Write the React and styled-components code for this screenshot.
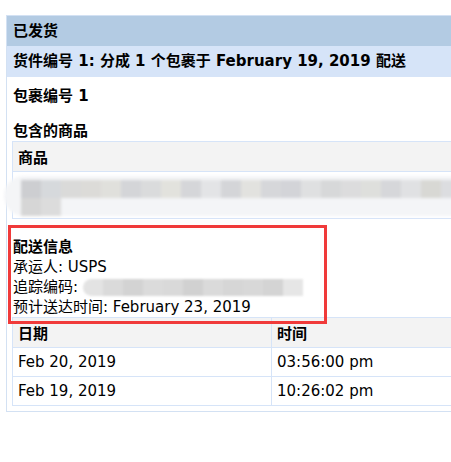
import React from 'react'
import styled, {createGlobalStyle} from 'styled-components'

const GlobalStyle = createGlobalStyle`
    html, body {
        margin: 0;
        padding: 0;
        background: #fff;
        overflow: hidden;
    }
    body {
        font-family: "DejaVu Sans", "Noto Sans CJK SC", sans-serif;
        font-size: 15px;
        color: #000;
    }
`

const itemMosaic = ['#cdced1', '#d6d9dc', '#dadad9', '#dcdbd8', '#e0e0dc', '#d4d5d8', '#dadbdc', '#e2e2dd', '#d5d6d9', '#e3e4e6', '#d4d5d8', '#e2e2df', '#d6d7da', '#d3d4d8', '#dfe0e1', '#d7d8d9', '#dcdcdd', '#dedfdc', '#d6d7da', '#e0e1e3', '#d8d8d4', '#dcdde0']
const trackMosaic = ['#e3e3e3', '#dadada', '#d3d3d3', '#dbdbdb', '#d9d9d9', '#d1d1d1', '#dadada', '#d6d6d6', '#d8d8d8', '#d4d4d4', '#e6e6e6']

const trackingRows = [
    {date: 'Feb 20, 2019', time: '03:56:00 pm'},
    {date: 'Feb 19, 2019', time: '10:26:02 pm'},
]

const App = () => {
    return (
        <>
            <GlobalStyle />
            <Panel>
                <TitleBar>已发货</TitleBar>
                <SubBar>货件编号 1: 分成 1 个包裹于 February 19, 2019 配送</SubBar>
                <Body>
                    <PackageTitle>包裹编号 1</PackageTitle>
                    <SectionTitle>包含的商品</SectionTitle>
                    <Table>
                        <thead>
                            <tr><HeadCell>商品</HeadCell></tr>
                        </thead>
                        <tbody>
                            <tr>
                                <ItemCell>
                                    <Smudge>
                                        <MosaicRow>
                                            {itemMosaic.map((c, i) => <Cell key={i} style={{background: c}} />)}
                                        </MosaicRow>
                                        <MosaicRow>
                                            <Cell style={{background: '#d6d6d6'}} />
                                            <Cell style={{background: '#dcdcdc'}} />
                                        </MosaicRow>
                                    </Smudge>
                                </ItemCell>
                            </tr>
                        </tbody>
                    </Table>

                    <ShippingInfo>
                        <Highlight />
                        <InfoHeading>配送信息</InfoHeading>
                        <InfoLine>承运人: USPS</InfoLine>
                        <InfoLine>
                            追踪编码:
                            <TrackBlur>
                                {trackMosaic.map((c, i) => <TrackCell key={i} style={{background: c}} />)}
                            </TrackBlur>
                        </InfoLine>
                        <InfoLine>预计送达时间: February 23, 2019</InfoLine>
                    </ShippingInfo>

                    <Table>
                        <thead>
                            <tr>
                                <HeadCell $width={259}>日期</HeadCell>
                                <HeadCell>时间</HeadCell>
                            </tr>
                        </thead>
                        <tbody>
                            {trackingRows.map(r => (
                                <tr key={r.time}>
                                    <DataCell>{r.date}</DataCell>
                                    <DataCell>{r.time}</DataCell>
                                </tr>
                            ))}
                        </tbody>
                    </Table>
                </Body>
            </Panel>
        </>
    )
}

const Panel = styled.div`
    margin: 15px 0 0 6px;
    width: 520px;
    border: 1px solid #d3e1f3;
`

const TitleBar = styled.div`
    height: 30px;
    line-height: 30px;
    padding-left: 6px;
    background: #b3cbe3;
    font-weight: bold;
`

const SubBar = styled.div`
    height: 31px;
    line-height: 31px;
    padding-left: 6px;
    background: #d6e4f8;
    font-weight: bold;
    white-space: nowrap;
`

const Body = styled.div`
    padding: 0 0 5px 5px;
`

const PackageTitle = styled.div`
    margin-top: 9px;
    padding-left: 1px;
    line-height: 20px;
    font-weight: bold;
`

const SectionTitle = styled.div`
    margin-top: 15px;
    padding-left: 1px;
    line-height: 20px;
    font-weight: bold;
`

const Table = styled.table`
    width: 510px;
    border-collapse: collapse;
    border: 1px solid #d6e4f8;
`

const HeadCell = styled.th`
    height: 30px;
    padding: 0 5px;
    text-align: left;
    font-weight: bold;
    background: #f3f3f3;
    border: 1px solid #d6e4f8;
    width: ${p => (p.$width ? `${p.$width}px` : 'auto')};
    box-sizing: border-box;
`

const DataCell = styled.td`
    height: 28px;
    padding: 0 5px;
    border: 1px solid #d6e4f8;
`

const ItemCell = styled.td`
    height: 46px;
    padding: 0;
    position: relative;
    border: 1px solid #d6e4f8;
`

const Smudge = styled.div`
    position: absolute;
    left: -9px;
    top: 4px;
    width: 470px;
    height: 40px;
    border-radius: 20px;
    background: #f4f5f7;
    filter: blur(1.5px);
    padding: 4px 0 0 17px;
    box-sizing: border-box;
`

const MosaicRow = styled.div`
    display: flex;
`

const Cell = styled.div`
    width: 20px;
    height: 18px;
    flex: none;
`

const ShippingInfo = styled.div`
    position: relative;
    margin-top: 18px;
    padding-left: 1px;
`

const Highlight = styled.div`
    position: absolute;
    left: -4px;
    top: -12px;
    width: 319px;
    height: 99px;
    border: 3px solid #f03a3a;
    box-sizing: border-box;
    pointer-events: none;
    z-index: 2;
`

const InfoHeading = styled.div`
    line-height: 20px;
    font-weight: bold;
`

const InfoLine = styled.div`
    line-height: 20px;
    display: flex;
    align-items: center;
`

const TrackBlur = styled.span`
    display: inline-flex;
    margin-left: 5px;
    height: 17px;
    border-radius: 9px 0 0 9px;
    overflow: hidden;
    filter: blur(1px);
`

const TrackCell = styled.span`
    width: 20px;
    height: 17px;
`

export default App
